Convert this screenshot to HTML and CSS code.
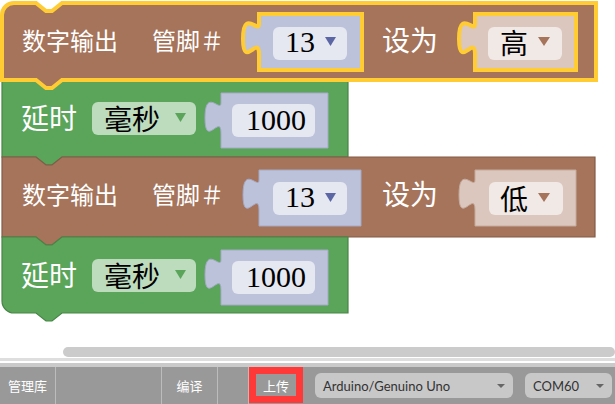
FILE: index.html
```html
<!DOCTYPE html>
<html lang="zh-CN">
<head>
    <meta charset="UTF-8">
    <title>Mixly</title>
    <link rel="stylesheet" href="styles.css">
</head>
<body>
    <div class="workspace">
        <svg class="blocks" width="615" height="345" viewBox="0 0 615 345">
            <!-- delay block -->
            <g class="block green">
                <path class="body" d="M 2,80 H 36 l 10,8 h 6 l 10,-8 H 348 V 157 H 62 l -10,8 h -6 l -10,-8 H 2 Z"/>
                <text class="label big" x="21" y="117">延时</text>
                <rect class="field-green" x="92" y="102" width="104" height="33" rx="6"/>
                <text class="field-text cjk" x="104" y="118">毫秒</text>
                <polygon class="arrow-green" points="175,113 186,113 180.5,122"/>
                <path class="shadow-num" d="M 221,93 H 328 V 148 H 221 V 133 c 0,-20 -16,16 -16,-15 s 16,-5 16,-15 Z"/>
                <rect class="field-num" x="232" y="104" width="83" height="33" rx="6"/>
                <text class="num" x="246" y="130">1000</text>
            </g>

            <!-- digital write, low -->
            <g class="block brown">
                <path class="body" d="M 2,157 H 36 l 10,8 h 6 l 10,-8 H 595 V 237 H 62 l -10,8 h -6 l -10,-8 H 2 Z"/>
                <text class="label" x="22" y="193">数字输出</text>
                <text class="label" x="152" y="193">管脚＃</text>
                <path class="shadow-num" d="M 259,170 H 361 V 226 H 259 V 210 c 0,-20 -16,16 -16,-15 s 16,-5 16,-15 Z"/>
                <rect class="field-num" x="273" y="182" width="74" height="33" rx="6"/>
                <text class="num" x="285" y="207">13</text>
                <polygon class="arrow-num" points="325,193 336,193 330.5,202"/>
                <text class="label big" x="382" y="193">设为</text>
                <path class="shadow-brown" d="M 475,170 H 576 V 226 H 475 V 210 c 0,-20 -16,16 -16,-15 s 16,-5 16,-15 Z"/>
                <rect class="field-brown" x="489" y="182" width="74" height="33" rx="6"/>
                <text class="field-text cjk" x="500" y="198">低</text>
                <polygon class="arrow-brown" points="538,193 550,193 544,202"/>
            </g>

            <!-- delay block, last -->
            <g class="block green">
                <path class="body" d="M 2,237 H 36 l 10,8 h 6 l 10,-8 H 348 V 313 H 62 l -10,8 h -6 l -10,-8 H 14 A 12,12 0 0 1 2,301 Z"/>
                <text class="label big" x="21" y="274">延时</text>
                <rect class="field-green" x="92" y="259" width="104" height="33" rx="6"/>
                <text class="field-text cjk" x="104" y="275">毫秒</text>
                <polygon class="arrow-green" points="175,270 186,270 180.5,279"/>
                <path class="shadow-num" d="M 221,250 H 328 V 305 H 221 V 290 c 0,-20 -16,16 -16,-15 s 16,-5 16,-15 Z"/>
                <rect class="field-num" x="232" y="261" width="83" height="33" rx="6"/>
                <text class="num" x="246" y="287">1000</text>
            </g>

            <!-- digital write, high (selected) -->
            <g class="block brown selected">
                <path class="body" d="M 2,15 A 12,12 0 0 1 14,3 H 36 l 10,8 h 6 l 10,-8 H 596 V 80 H 62 l -10,8 h -6 l -10,-8 H 2 Z"/>
                <text class="label" x="22" y="39">数字输出</text>
                <text class="label" x="152" y="39">管脚＃</text>
                <path class="shadow-num" d="M 259,14 H 362 V 70 H 259 V 54 c 0,-20 -16,16 -16,-15 s 16,-5 16,-15 Z"/>
                <rect class="field-num" x="273" y="27" width="74" height="33" rx="6"/>
                <text class="num" x="285" y="52">13</text>
                <polygon class="arrow-num" points="325,37 336,37 330.5,46"/>
                <text class="label big" x="382" y="39">设为</text>
                <path class="shadow-brown" d="M 475,14 H 576 V 70 H 475 V 54 c 0,-20 -16,16 -16,-15 s 16,-5 16,-15 Z"/>
                <rect class="field-brown" x="488" y="27" width="74" height="33" rx="6"/>
                <text class="field-text cjk" x="500" y="42">高</text>
                <polygon class="arrow-brown" points="538,37 550,37 544,46"/>
            </g>
        </svg>
    </div>

    <div class="scroll-row">
        <div class="hscroll"></div>
    </div>
    <div class="divider"></div>

    <div class="toolbar">
        <div class="tool tool-lib">管理库</div>
        <div class="tool tool-blank"></div>
        <div class="tool tool-compile">编译</div>
        <div class="tool tool-gap"></div>
        <div class="upload"><span>上传</span></div>
        <div class="select select-board">
            <span>Arduino/Genuino Uno</span>
            <i class="caret"></i>
        </div>
        <div class="select select-port">
            <span>COM60</span>
            <i class="caret"></i>
        </div>
    </div>
</body>
</html>
```

FILE: styles.css
```css
body {
    margin: 0;
    width: 615px;
    height: 404px;
    overflow: hidden;
    background-color: #ffffff;
    font-family: "Noto Sans", "Noto Sans CJK SC", sans-serif;
}
.workspace {
    height: 345px;
}
.blocks {
    display: block;
}

/* block bodies */
.brown .body {
    fill: #a5745b;
    stroke: #835b47;
    stroke-width: 1.2;
}
.green .body {
    fill: #5ba55b;
    stroke: #478547;
    stroke-width: 1.2;
}
.selected .body,
.selected .shadow-num,
.selected .shadow-brown {
    stroke: #ffcc33;
    stroke-width: 4;
}
.shadow-num {
    fill: #bdc2db;
    stroke: #a4a9c6;
    stroke-width: 1;
}
.shadow-brown {
    fill: #dbc7bd;
    stroke: #c4ab9e;
    stroke-width: 1;
}

/* fields */
.field-num {
    fill: #e5e7f1;
}
.field-brown {
    fill: #f1e9e5;
}
.field-green {
    fill: #bddbbd;
}
.arrow-num {
    fill: #5b67a5;
}
.arrow-brown {
    fill: #a5745b;
}
.arrow-green {
    fill: #5ba55b;
}

/* texts */
.label {
    fill: #ffffff;
    font-family: "Noto Sans CJK SC", sans-serif;
    font-size: 24px;
    dominant-baseline: central;
}
.label.big {
    font-size: 28px;
}
.field-text {
    fill: #000000;
    font-family: "Noto Sans CJK SC", sans-serif;
    font-size: 28px;
    dominant-baseline: central;
}
.num {
    fill: #000000;
    font-family: "Liberation Serif", serif;
    font-size: 30px;
}

/* scrollbar and divider */
.scroll-row {
    height: 12px;
    padding: 2px 0 0 63px;
    box-sizing: border-box;
}
.hscroll {
    height: 10px;
    background-color: #cbcbcb;
    border-radius: 5px;
}
.divider {
    height: 10px;
    background: linear-gradient(#ffffff 0, #ffffff 1px, #dedede 1px, #dedede 4px, #ffffff 4px, #ffffff 6px, #cacaca 6px);
}

/* bottom toolbar */
.toolbar {
    display: flex;
    align-items: center;
    height: 37px;
    background-color: #999999;
    color: #ffffff;
    font-family: "Noto Sans CJK SC", sans-serif;
    font-size: 13px;
}
.tool {
    height: 100%;
    border-right: 1px solid #bcbcbc;
    display: flex;
    align-items: center;
    box-sizing: border-box;
}
.tool-lib {
    width: 56px;
    padding-left: 8px;
}
.tool-blank {
    width: 106px;
}
.tool-compile {
    width: 56px;
    justify-content: center;
}
.tool-gap {
    width: 31px;
}
.upload {
    width: 54px;
    height: 36px;
    align-self: flex-start;
    border: 7px solid #ff3838;
    box-sizing: border-box;
    display: flex;
    align-items: center;
    justify-content: center;
}
.select {
    height: 25px;
    margin-left: 12px;
    padding: 0 8px;
    box-sizing: border-box;
    background-color: #c8c8c8;
    border-radius: 6px;
    color: #333333;
    font-family: Lato, "Noto Sans", sans-serif;
    font-size: 13px;
    display: flex;
    align-items: center;
    justify-content: space-between;
}
.select-board {
    width: 198px;
}
.select-port {
    width: 87px;
}
.caret {
    width: 0;
    height: 0;
    border-left: 4px solid transparent;
    border-right: 4px solid transparent;
    border-top: 4px solid #666666;
}
```
